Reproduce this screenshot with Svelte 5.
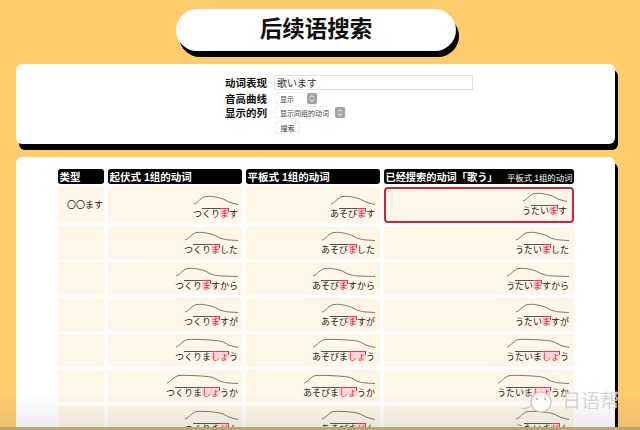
<script>
  const stems = [
    ["つ", "くり"],
    ["あ", "そび"],
    ["う", "たい"],
  ];

  // pre = kana before the accent mark, red = accented part, post = what follows
  const forms = [
    { pre: "", red: "ま", post: "す" },
    { pre: "", red: "ま", post: "した" },
    { pre: "", red: "ま", post: "すから" },
    { pre: "", red: "ま", post: "すが" },
    { pre: "ま", red: "しょ", post: "う" },
    { pre: "ま", red: "しょ", post: "うか" },
    { pre: "ま", red: "せ", post: "ん" },
  ];

  const charW = 9;

  function curve(form) {
    const a = 3 + form.pre.length + form.red.length;
    const w = (a + form.post.length) * charW;
    const x = a * charW;
    return {
      w,
      d: `M1 9C5 8 8 2 13 1.5C20 1 ${x - 14} 2 ${x - 9} 3C${x - 4} 4 ${x - 2} 7 ${x + 3} 8C${x + 5} 8.5 ${x + 7} 9 ${w} 9.5`,
    };
  }
</script>

{#snippet word(stem, form)}
  {@const c = curve(form)}
  <svg class="pitch" width={c.w} height="11" viewBox="0 0 {c.w} 11">
    <path d={c.d} fill="none" stroke="#77776d" stroke-width="1" />
  </svg>
  <span class="word"
    ><span class="kana">{stem[0]}</span><span class="kana over"
      >{stem[1]}{form.pre}</span
    ><span class="kana accent">{form.red}</span><span class="kana">{form.post}</span></span
  >
{/snippet}

{#snippet stepper()}
  <span class="stepper">
    <svg width="8" height="9" viewBox="0 0 8 9">
      <path d="M2 3.5L4 1.5L6 3.5M2 5.5L4 7.5L6 5.5" fill="none" stroke="#fff" stroke-width="1" />
    </svg>
  </span>
{/snippet}

<div class="page">
  <h1 class="title">后续语搜索</h1>

  <section class="panel form">
    <span class="label">动词表现</span>
    <input class="verb" value="歌います" />
    <span class="label">音高曲线</span>
    <div class="select one"><span>显示</span>{@render stepper()}</div>
    <span class="label">显示的列</span>
    <div class="select two"><span>显示同组的动词</span>{@render stepper()}</div>
    <span></span>
    <button class="search">搜索</button>
  </section>

  <section class="panel results">
    <div class="grid">
      <div class="head">类型</div>
      <div class="head">起伏式 1组的动词</div>
      <div class="head">平板式 1组的动词</div>
      <div class="head last">已经搜索的动词「歌う」<small>平板式 1组的动词</small></div>

      {#each forms as form, i}
        <div class="cell type">{i === 0 ? "〇〇ます" : ""}</div>
        <div class="cell first-col">{@render word(stems[0], form)}</div>
        <div class="cell">{@render word(stems[1], form)}</div>
        <div class="cell searched" class:hit={i === 0}>{@render word(stems[2], form)}</div>
      {/each}
    </div>
  </section>

  <div class="fade"></div>
  <div class="watermark">
    <svg width="34" height="28" viewBox="0 0 34 28">
      <circle cx="21" cy="14" r="10" fill="#fff" fill-opacity=".8" stroke="#c4c4be" stroke-width="1.2" />
      <path d="M11 8C7 6 5 4 2 2M11 18C7 21 4 21 1 20" fill="none" stroke="#c4c4be" stroke-width="1.2" />
      <circle cx="17" cy="11" r="1.2" fill="#c4c4be" />
      <circle cx="25" cy="11" r="1.2" fill="#c4c4be" />
    </svg>
    <span>日语帮</span>
  </div>
</div>

<style>
  :global(body) {
    margin: 0;
  }

  .page {
    position: relative;
    box-sizing: border-box;
    width: 640px;
    height: 430px;
    padding: 9px 25px 0 16px;
    overflow: hidden;
    background: #ffcc6b;
    font-family: "Liberation Sans", "Noto Sans CJK SC", sans-serif;
    color: #111;
  }

  .title {
    box-sizing: border-box;
    width: 280px;
    height: 42px;
    margin: 0 0 13px 160px;
    border-radius: 21px;
    background: #fff;
    box-shadow: 3px 6px 0 #000;
    font-size: 22.5px;
    line-height: 42px;
    font-weight: 700;
    text-align: center;
  }

  .panel {
    border-radius: 6px;
    background: #fff;
    box-shadow: 3px 6px 0 #000;
  }

  .form {
    display: grid;
    grid-template-columns: 251px 199px;
    column-gap: 7px;
    align-items: center;
    justify-items: start;
    height: 80px;
    box-sizing: border-box;
    padding-top: 11px;
    margin-bottom: 13px;
    grid-auto-rows: min-content;
  }

  .label {
    justify-self: end;
    font-size: 10.5px;
    line-height: 13px;
    font-weight: 700;
  }

  .verb {
    box-sizing: border-box;
    width: 199px;
    height: 15px;
    padding: 0 2px;
    margin-bottom: 2px;
    border: 1px solid #e2e2e2;
    font: 10px "Liberation Sans", "Noto Sans CJK JP", sans-serif;
    color: #333;
  }

  .select {
    display: flex;
    align-items: center;
    justify-content: space-between;
    box-sizing: border-box;
    height: 11px;
    margin: 1px 0 2px 2px;
    padding-left: 4px;
    border-radius: 2px;
    background: #fff;
    box-shadow: 0 0 1px #999;
    font-size: 7px;
    color: #444;
  }

  .select.one {
    width: 41px;
  }

  .select.two {
    width: 69px;
  }

  .stepper {
    display: flex;
    align-items: center;
    justify-content: center;
    width: 10px;
    height: 11px;
    border-radius: 2px;
    background: #a4a4a4;
  }

  .search {
    width: 23px;
    height: 11px;
    margin: 2px 0 0 2px;
    padding: 0;
    border: 0;
    border-radius: 2px;
    background: #fff;
    box-shadow: 0 0 1px #888;
    font: 7px "Liberation Sans", "Noto Sans CJK SC", sans-serif;
    color: #333;
  }

  .results {
    height: 320px;
    padding: 12px 0 0 42px;
  }

  .grid {
    display: grid;
    grid-template-columns: 46px 134px 134px 190px;
    grid-template-rows: 15px 36px;
    grid-auto-rows: 32.5px;
    column-gap: 4px;
    row-gap: 3.3px;
  }

  .head {
    display: flex;
    align-items: center;
    justify-content: space-between;
    padding: 0 1.5px;
    border-radius: 3px;
    background: #000;
    color: #fff;
    font-size: 10.5px;
    font-weight: 700;
    white-space: nowrap;
    overflow: hidden;
  }

  .head.last {
    font-size: 10.2px;
  }

  .head small {
    font-size: 8.4px;
    font-weight: 400;
  }

  .cell {
    display: flex;
    flex-direction: column;
    align-items: flex-end;
    justify-content: flex-end;
    box-sizing: border-box;
    padding: 0 5px 4px 0;
    background: #fef6e6;
    font-family: "Noto Sans CJK JP", sans-serif;
    font-size: 9px;
    line-height: 11px;
    color: #222;
  }

  .first-col {
    padding-right: 4px;
  }

  .type {
    justify-content: flex-start;
    padding: 12px 1px 0 0;
  }

  .searched {
    padding-right: 5px;
  }

  .searched.hit {
    border: 2px solid #d4213d;
    border-radius: 4px;
    padding: 0 5px 5px 0;
  }

  .pitch {
    display: block;
    margin-bottom: 2px;
  }

  .word {
    display: flex;
    white-space: nowrap;
  }

  .kana {
    display: block;
    height: 11px;
  }

  .over {
    box-shadow: inset 0 1px 0 #555;
  }

  .accent {
    position: relative;
    background: linear-gradient(#fbd3d8 70%, transparent 70%);
    box-shadow: inset 0 1px 0 #e0405a;
    color: #d91f36;
  }

  .accent::after {
    content: "";
    position: absolute;
    top: 0;
    right: 0;
    width: 1px;
    height: 4px;
    background: #e0304a;
  }

  .fade {
    position: absolute;
    left: 0;
    right: 0;
    bottom: 0;
    height: 36px;
    border-bottom: 3px solid #bda56e;
    box-sizing: border-box;
    background: linear-gradient(rgba(70, 80, 130, 0), rgba(70, 80, 130, 0.1));
  }

  .watermark {
    position: absolute;
    left: 520px;
    top: 388px;
    display: flex;
    align-items: center;
    gap: 8px;
  }

  .watermark span {
    font-size: 19px;
    line-height: 20px;
    color: rgba(190, 190, 190, 0.9);
    -webkit-text-stroke: 0.3px #fff;
  }
</style>
